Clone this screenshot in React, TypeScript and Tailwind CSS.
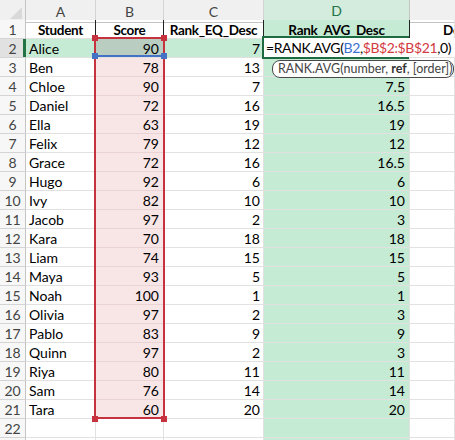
import React from 'react';

type Row = [string, number, number, string];

const ROWS: Row[] = [
  ['Alice', 90, 7, ''],
  ['Ben', 78, 13, '13'],
  ['Chloe', 90, 7, '7.5'],
  ['Daniel', 72, 16, '16.5'],
  ['Ella', 63, 19, '19'],
  ['Felix', 79, 12, '12'],
  ['Grace', 72, 16, '16.5'],
  ['Hugo', 92, 6, '6'],
  ['Ivy', 82, 10, '10'],
  ['Jacob', 97, 2, '3'],
  ['Kara', 70, 18, '18'],
  ['Liam', 74, 15, '15'],
  ['Maya', 93, 5, '5'],
  ['Noah', 100, 1, '1'],
  ['Olivia', 97, 2, '3'],
  ['Pablo', 83, 9, '9'],
  ['Quinn', 97, 2, '3'],
  ['Riya', 80, 11, '11'],
  ['Sam', 76, 14, '14'],
  ['Tara', 60, 20, '20'],
];

const GRID = 'grid grid-cols-[26px_70px_68px_100px_146px_1fr]';

function Cell({ className = '', children }: { className?: string; children?: React.ReactNode }) {
  return (
    <div className={`h-[19px] border-r border-b border-[#e1e1e1] flex items-center pt-[1px] overflow-hidden whitespace-nowrap ${className}`}>
      {children}
    </div>
  );
}

function RowHead({ n, active }: { n: number; active?: boolean }) {
  return (
    <div
      className={`h-[19px] border-b border-r border-[#d4d4d4] border-r-[#c4c4c4] flex items-center justify-center pt-[1px] text-[#444] text-[14px] relative ${
        active ? 'bg-[#e1e1e1]' : 'bg-[#f7f7f7]'
      }`}
    >
      {n}
      {active && <div className="absolute right-[-1px] top-0 h-full w-[3px] bg-[#217346]" />}
    </div>
  );
}

export default function App() {
  return (
    <div className="relative w-[455px] h-[440px] overflow-hidden bg-white text-black font-['Lato','Liberation_Sans',sans-serif] text-[14px]">
      {/* column letters */}
      <div className={`${GRID} h-[20px] bg-[#f0f0f0] text-[#444]`}>
        <div className="border-r border-b border-[#c4c4c4] relative">
          <div className="absolute right-[3px] bottom-[3px] w-0 h-0 border-l-[12px] border-l-transparent border-b-[12px] border-b-[#d9d9d9]" />
        </div>
        {['A', 'B', 'C'].map((c) => (
          <div key={c} className="border-r border-b border-[#d4d4d4] border-b-[#c4c4c4] flex items-center justify-center">
            {c}
          </div>
        ))}
        <div className="border-r border-[#c4c4c4] border-b-2 border-b-[#217346] bg-[#d3ecdd] text-[#217346] flex items-center justify-center">
          D
        </div>
        <div className="border-b border-[#c4c4c4]" />
      </div>

      {/* row 1 headers */}
      <div className={`${GRID} text-[13.5px] tracking-[-0.3px]`}>
        <RowHead n={1} />
        <Cell className="justify-center font-bold border-r-[#222] pt-[2px]">Student</Cell>
        <Cell className="justify-center font-bold border-r-[#222] pt-[2px]">Score</Cell>
        <Cell className="justify-center font-bold border-r-[#222] pt-[2px]">Rank_EQ_Desc</Cell>
        {/* underscores sit under the editor's top border */}
        <Cell className="justify-center font-bold bg-[#c6ebd5] border-r-[#222] border-b-[#b0d9c0] pt-[2px]">
          Rank<span className="text-transparent">_</span>AVG<span className="text-transparent">_</span>Desc
        </Cell>
        <Cell className="pl-[33px] font-bold pt-[2px]">Desc</Cell>
      </div>

      {ROWS.map(([name, score, eq, avg], i) => {
        const first = i === 0;
        return (
          <div key={name} className={GRID}>
            <RowHead n={i + 2} active={first} />
            <Cell className={`pl-[3px] ${first ? 'bg-[#c6ebd5] border-[#b0d9c0]' : ''}`}>{name}</Cell>
            <Cell className={`justify-end pr-[4px] ${first ? 'bg-[#b9cdc1]' : 'bg-[#f8e6e7] border-[#ead3d5]'}`}>{score}</Cell>
            <Cell className={`justify-end pr-[3px] ${first ? 'bg-[#c6ebd5] border-[#b0d9c0]' : ''}`}>{eq}</Cell>
            <Cell className="justify-end pr-[4px] bg-[#c6ebd5] border-[#b0d9c0]">{avg}</Cell>
            <Cell />
          </div>
        );
      })}

      {[22, 23].map((n) => (
        <div key={n} className={GRID}>
          <RowHead n={n} />
          <Cell />
          <Cell />
          <Cell />
          <Cell className="bg-[#c6ebd5] border-[#b0d9c0]" />
          <Cell />
        </div>
      ))}

      {/* selection of B2:B21 */}
      <div className="absolute left-[94px] top-[37px] w-[71px] h-[382px] border-2 border-[#c7323f] pointer-events-none" />
      <div className="absolute left-[95px] top-[55px] w-[69px] h-[2px] bg-[#4472c4]" />
      <div className="absolute left-[92px] top-[35px] w-[6px] h-[6px] bg-[#c7323f]" />
      <div className="absolute left-[161px] top-[35px] w-[6px] h-[6px] bg-[#c7323f]" />
      <div className="absolute left-[92px] top-[53px] w-[6px] h-[6px] bg-[#4472c4]" />
      <div className="absolute left-[161px] top-[53px] w-[6px] h-[6px] bg-[#4472c4]" />
      <div className="absolute left-[92px] top-[416px] w-[6px] h-[6px] bg-[#c7323f]" />
      <div className="absolute left-[161px] top-[416px] w-[6px] h-[6px] bg-[#c7323f]" />

      {/* in-cell editor on D2 */}
      <div className="absolute left-[262px] top-[36px] w-[147px] h-[23px] border-2 border-r-0 border-[#1e6b41] bg-white">
        <div className="absolute left-[2px] top-0 h-full flex items-center whitespace-nowrap text-[14px] tracking-[-0.4px] bg-white pr-[4px]">
          <span>=RANK.AVG(</span>
          <span className="text-[#3b6fd1]">B2</span>
          <span>,</span>
          <span className="text-[#d33a3f]">$B$2:$B$21</span>
          <span>,0)</span>
        </div>
      </div>

      {/* function tooltip */}
      <div className="absolute left-[272px] top-[60px] w-[182px] h-[18px] rounded-[8px] border-[1.5px] border-[#4a4a4a] bg-white flex items-center pl-[5px] whitespace-nowrap text-[12.5px] text-[#444]">
        RANK.AVG(number, <b className="font-bold text-[#333] ml-[3px]">ref</b>, [order])
      </div>
    </div>
  );
}
